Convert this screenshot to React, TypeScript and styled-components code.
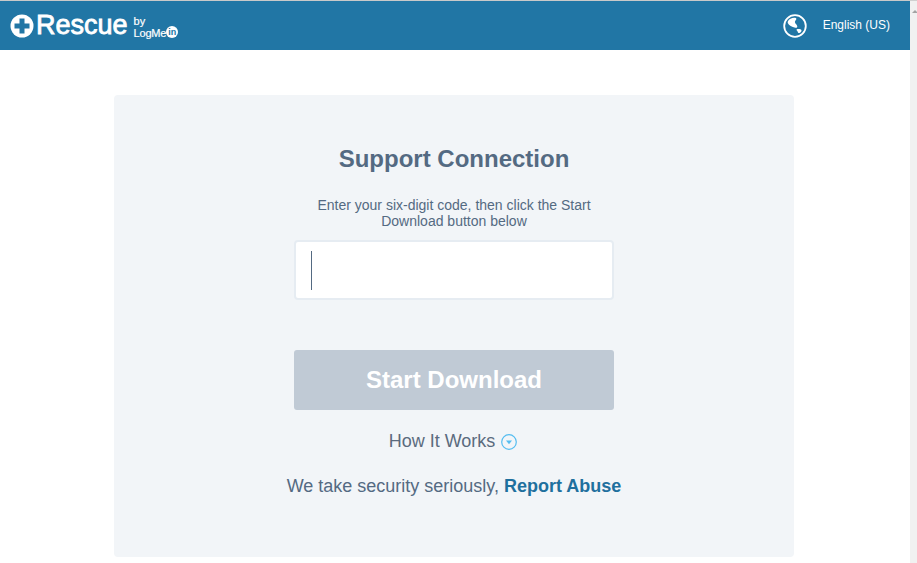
import React from "react";
import styled, { createGlobalStyle } from "styled-components";

const GlobalStyle = createGlobalStyle`
  html, body {
    margin: 0;
    padding: 0;
    height: 563px;
    overflow: hidden;
    background: #fff;
    font-family: "Liberation Sans", Arial, sans-serif;
  }
`;

const Page = styled.div`
  display: flex;
  width: 917px;
  height: 563px;
  overflow: hidden;
`;

const Main = styled.div`
  width: 910px;
  flex: none;
`;

const ScrollTrack = styled.div`
  flex: 1;
  display: flex;
  justify-content: center;
  padding-top: 9px;
  background: #f1f1f1;
  border-top: 1px solid #d0d0d0;
  box-sizing: border-box;
`;

const ScrollArrow = styled.div`
  width: 0;
  height: 0;
  margin-left: 2px;
  border-left: 3px solid transparent;
  border-right: 3px solid transparent;
  border-bottom: 3px solid #a3a3a3;
`;

const Header = styled.header`
  height: 49px;
  background: #2176a5;
  border-top: 1px solid #c9c9c9;
  display: flex;
  align-items: center;
  justify-content: space-between;
  padding: 0 20px 0 10px;
`;

const Logo = styled.div`
  display: flex;
  align-items: center;
  color: #fff;
`;

const Wordmark = styled.span`
  font-size: 27px;
  line-height: 30px;
  margin: -2px 0 0 2px;
  -webkit-text-stroke: 0.8px #fff;
`;

const ByLine = styled.div`
  display: flex;
  flex-direction: column;
  margin: 2px 0 0 6px;
  font-size: 11px;
  line-height: 12px;
  -webkit-text-stroke: 0.2px #fff;
`;

const LogMe = styled.div`
  display: flex;
  align-items: center;
  height: 12px;
  letter-spacing: -0.2px;
`;

const InBadge = styled.span`
  width: 12px;
  height: 12px;
  margin-top: -1px;
  border-radius: 50%;
  background: #fff;
  color: #2176a5;
  font-size: 9px;
  font-weight: 700;
  line-height: 12px;
  text-align: center;
  letter-spacing: 0;
  -webkit-text-stroke: 0;
`;

const LangPicker = styled.div`
  display: flex;
  align-items: center;
  gap: 16px;
  color: #fff;
  font-size: 12px;
  line-height: 14px;
`;

const LangLabel = styled.span`
  margin-top: -2px;
`;

const Card = styled.main`
  width: 680px;
  height: 462px;
  margin: 45px 0 0 114px;
  background: #f2f5f8;
  border-radius: 4px;
  display: flex;
  flex-direction: column;
  align-items: center;
  padding-top: 50px;
  box-sizing: border-box;
  color: #546a82;
`;

const Title = styled.h1`
  margin: 0;
  font-size: 24px;
  line-height: 28px;
  font-weight: 700;
`;

const Hint = styled.p`
  width: 300px;
  margin: 24px 0 0;
  font-size: 14px;
  line-height: 16px;
  text-align: center;
`;

const CodeField = styled.div`
  width: 320px;
  height: 60px;
  margin-top: 11px;
  box-sizing: border-box;
  background: #fff;
  border: 2px solid #e6ecf2;
  border-radius: 4px;
  display: flex;
  align-items: center;
  padding-left: 15px;
`;

const Caret = styled.span`
  width: 1px;
  height: 39px;
  background: #546a82;
`;

const StartButton = styled.button`
  width: 320px;
  height: 60px;
  margin-top: 50px;
  border: 0;
  border-radius: 3px;
  background: #c0cad5;
  color: #fff;
  font-family: inherit;
  font-size: 24px;
  font-weight: 700;
`;

const HowItWorks = styled.div`
  display: flex;
  align-items: center;
  gap: 6px;
  margin-top: 21px;
  padding-right: 2px;
  font-size: 18px;
  line-height: 21px;
  color: #5b6b7e;
`;

const Security = styled.p`
  margin: 24px 0 0;
  font-size: 18px;
  line-height: 21px;
`;

const ReportLink = styled.a`
  font-weight: 700;
  color: #1f709e;
`;

const PlusMark = () => (
  <svg width="24" height="24" viewBox="0 0 24 24">
    <circle cx="12" cy="12" r="11.5" fill="#fff" />
    <path d="M9.5 4.5h5v5h5v5h-5v5h-5v-5h-5v-5h5z" fill="#2176a5" />
  </svg>
);

const GlobeIcon = () => (
  <svg width="24" height="24" viewBox="0 0 24 24">
    <circle cx="12" cy="12" r="10.8" fill="none" stroke="#fff" strokeWidth="1.800" />
    <path
      d="M4.800 7.500C6 4.800 9 3.600 12 3.800c1.400.1 1.800 1.300.9 2.300-.9 1-1.300 2-.6 3.100.8 1.200 2 2 2 3.400 0 1-.9 1.500-2 1.100C9 13 5.800 11.500 4.900 9.300c-.2-.6-.3-1.200-.1-1.800z"
      fill="#fff"
    />
    <path d="M13.800 15.200c1.500-.6 4-.3 4.600.7.500 1-.5 2.500-1.900 3-1 .3-1.600-.3-1.800-1.200-.3-.9-1.800-1.900-.9-2.500z" fill="#fff" />
  </svg>
);

const InfoToggle = () => (
  <svg width="16" height="16" viewBox="0 0 16 16">
    <circle cx="8" cy="8" r="7.300" fill="none" stroke="#55bdf0" strokeWidth="1.200" />
    <path d="M5 6.500h6L8 10.200z" fill="#55bdf0" />
  </svg>
);

export default function App() {
  return (
    <Page>
      <GlobalStyle />
      <Main>
        <Header>
          <Logo>
            <PlusMark />
            <Wordmark>Rescue</Wordmark>
            <ByLine>
              <span>by</span>
              <LogMe>
                LogMe<InBadge>in</InBadge>
              </LogMe>
            </ByLine>
          </Logo>
          <LangPicker>
            <GlobeIcon />
            <LangLabel>English (US)</LangLabel>
          </LangPicker>
        </Header>
        <Card>
          <Title>Support Connection</Title>
          <Hint>Enter your six-digit code, then click the Start Download button below</Hint>
          <CodeField>
            <Caret />
          </CodeField>
          <StartButton>Start Download</StartButton>
          <HowItWorks>
            How It Works
            <InfoToggle />
          </HowItWorks>
          <Security>
            We take security seriously, <ReportLink>Report Abuse</ReportLink>
          </Security>
        </Card>
      </Main>
      <ScrollTrack>
        <ScrollArrow />
      </ScrollTrack>
    </Page>
  );
}
